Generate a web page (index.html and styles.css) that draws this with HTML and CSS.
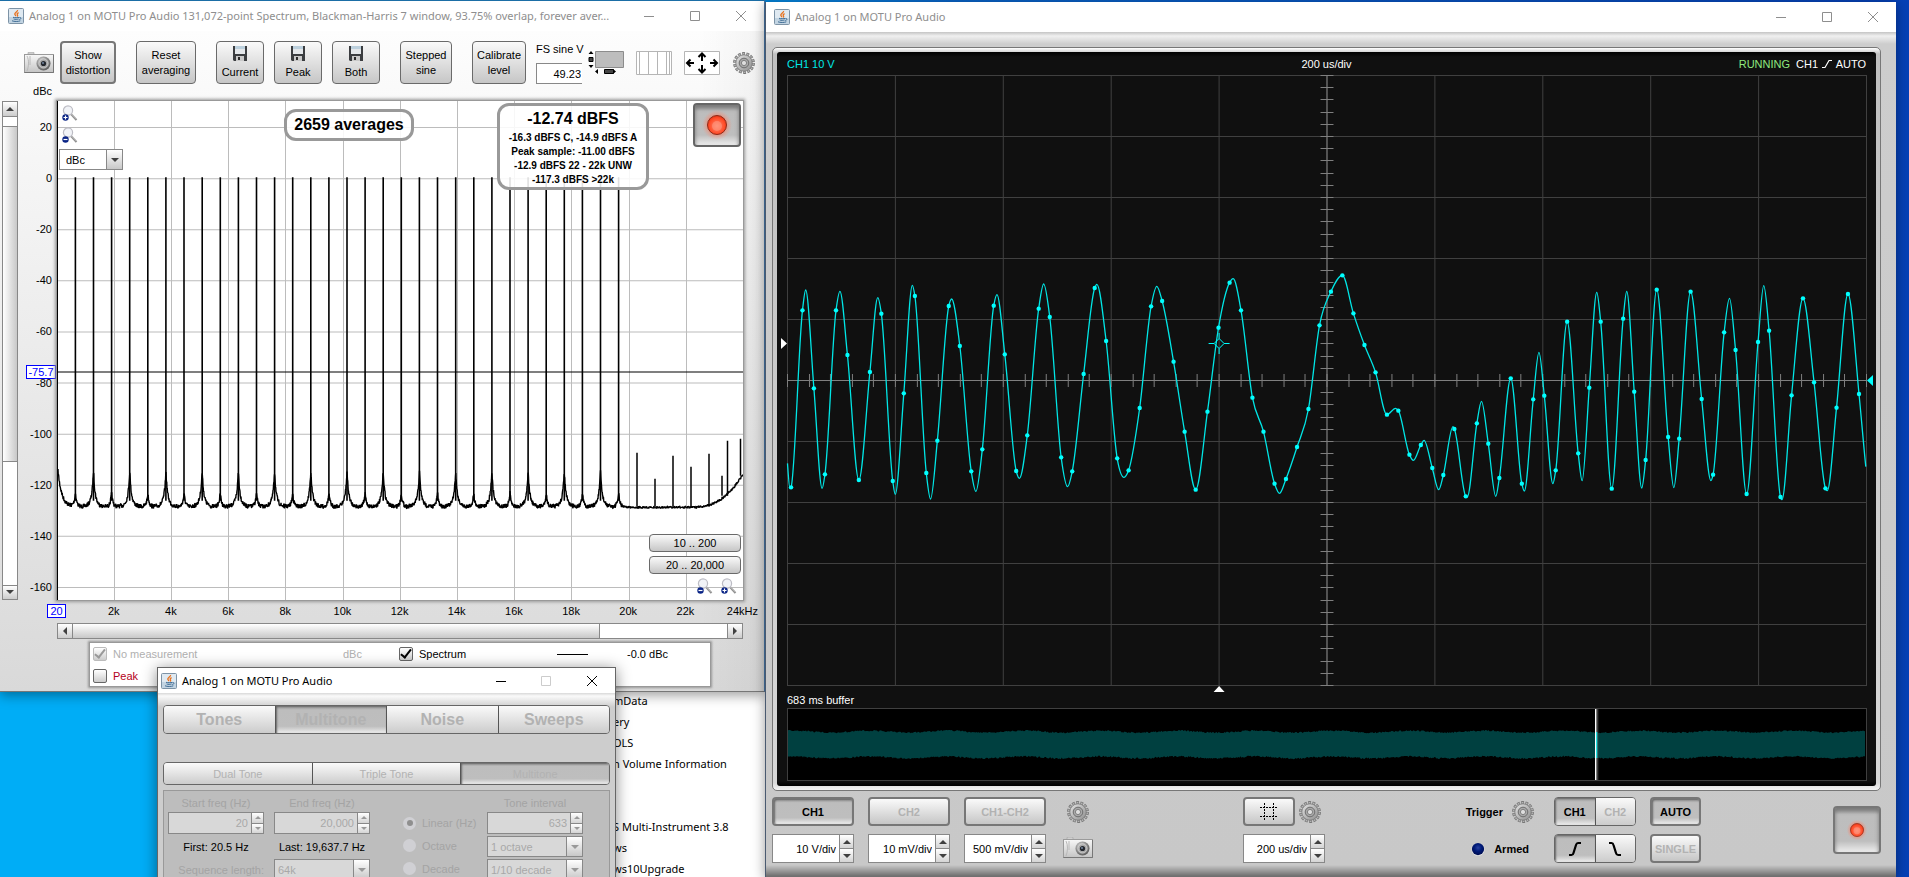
FILE: index.html
```html
<!DOCTYPE html>
<html lang="en">
<head>
<meta charset="utf-8">
<title>Analog 1 on MOTU Pro Audio</title>
<link rel="stylesheet" href="styles.css">
</head>
<body>
<svg class="defs" aria-hidden="true">
  <defs>
    <linearGradient id="metal" x1="0" y1="0" x2="1" y2="1">
      <stop offset="0" stop-color="#e4e4e4"/><stop offset="1" stop-color="#8e8e8e"/>
    </linearGradient>
    <linearGradient id="body" x1="0" y1="0" x2="0" y2="1">
      <stop offset="0" stop-color="#f8f8f8"/><stop offset="1" stop-color="#c4c4c4"/>
    </linearGradient>
    <radialGradient id="lens" cx=".4" cy=".35" r=".7">
      <stop offset="0" stop-color="#e8e8e8"/><stop offset=".6" stop-color="#8a8a8a"/><stop offset="1" stop-color="#555"/>
    </radialGradient>
    <radialGradient id="glow"><stop offset=".55" stop-color="#ff6a4a" stop-opacity=".6"/><stop offset="1" stop-color="#ff8a70" stop-opacity="0"/></radialGradient>
    <radialGradient id="red" cx=".5" cy=".55" r=".6"><stop offset="0" stop-color="#ff8a70"/><stop offset=".7" stop-color="#ff4a26"/><stop offset="1" stop-color="#d22c10"/></radialGradient>
    <radialGradient id="navy" cx=".5" cy=".4" r=".6"><stop offset="0" stop-color="#2740a0"/><stop offset=".5" stop-color="#001a78"/><stop offset="1" stop-color="#000e50"/></radialGradient>
  </defs>
  <symbol id="java" viewBox="0 0 16 16">
    <rect x=".5" y=".5" width="15" height="15" rx="1" fill="#dfe9f1" stroke="#7d93a6"/>
    <path d="M1 9h14v6H1z" fill="#c2d4e2"/>
    <path d="M9.6 2c.4 1.400-3 2.400-2.800 4 .1.900 1 1.300 1 2.200M10.600 4.600c-1.400.7-1.900 1.300-1.100 2.300.4.600.2 1-.4 1.500" fill="none" stroke="#e8711c" stroke-width="1.300"/>
    <path d="M5 9.300c1.500.5 5 .5 6.200 0M5.600 11c1.500.5 3.800.5 5 0M4 12.800c2 .9 6.500.9 8.300 0M11.500 9.500c2-.3 2 1.600-.2 2" fill="none" stroke="#3f6c94" stroke-width="1"/>
  </symbol>
  <symbol id="camera" viewBox="0 0 30 22">
    <rect x="4" y="0" width="6" height="4" rx="1" fill="#cfcfcf" stroke="#a0a0a0" stroke-width=".6"/>
    <rect x=".5" y="2.500" width="29" height="18" fill="url(#body)" stroke="#9a9a9a"/>
    <path d="M29.500 3v17.500H.5" fill="none" stroke="#777"/>
    <path d="M3 4c2 4 2 10 0 15M6 4v9" fill="none" stroke="#b8b8b8"/>
    <circle cx="19.500" cy="11.500" r="7" fill="url(#lens)"/>
    <circle cx="19.500" cy="11.500" r="4.600" fill="#a9a9a9" stroke="#dcdcdc" stroke-width=".7"/>
    <circle cx="19.500" cy="11.500" r="2.600" fill="#23272e"/><circle cx="19" cy="11" r=".9" fill="#7d91ac"/>
  </symbol>
  <symbol id="gear" viewBox="0 0 22 22">
    <circle cx="11" cy="11" r="9.500" fill="none" stroke="#777" stroke-width="2.800" stroke-dasharray="2.900 1.363"/>
    <circle cx="11" cy="11" r="9.300" fill="none" stroke="#b4b4b4" stroke-width="1.600" stroke-dasharray="1.600 2.573" stroke-dashoffset="-.6"/>
    <circle cx="11" cy="11" r="8.200" fill="url(#metal)" stroke="#777" stroke-width=".8"/>
    <circle cx="11" cy="11" r="4.800" fill="#a8a8a8" stroke="#6e6e6e" stroke-width="1"/>
    <circle cx="11" cy="11" r="2.600" fill="#dedede" stroke="#808080" stroke-width="1"/>
  </symbol>
  <symbol id="floppy" viewBox="0 0 14 15">
    <path d="M0 0h14v15H1l-1-1z" fill="#3b3d40"/>
    <path d="M2 0h10v8H2z" fill="#e4e7ea"/><path d="M2 0h10v3H2z" fill="#bcd0dd"/>
    <path d="M3 10h8v5H3z" fill="#c9c9c9"/><path d="M5 11h2v3H5z" fill="#2a2a2a"/>
  </symbol>
  <symbol id="lensbase" viewBox="0 0 16 16">
    <path d="M9 9l5.500 6" stroke="#909090" stroke-width="2"/><path d="M9.500 9l5 5" stroke="#d6d6d6" stroke-width=".8"/>
    <circle cx="6" cy="5.500" r="4.600" fill="#f1f3f7" stroke="#bcbcc4" stroke-width="1.200"/>
    <circle cx="3.500" cy="12.500" r="3.200" fill="#0a2486"/>
  </symbol>
  <symbol id="zoomin" viewBox="0 0 16 16"><use href="#lensbase"/><path d="M1.500 12.500h4M3.500 10.500v4" stroke="#fff" stroke-width="1.200"/></symbol>
  <symbol id="zoomout" viewBox="0 0 16 16"><use href="#lensbase"/><path d="M1.500 12.500h4" stroke="#fff" stroke-width="1.200"/></symbol>
  <symbol id="record" viewBox="0 0 32 32">
    <circle cx="16" cy="16" r="15" fill="url(#glow)"/>
    <circle cx="16" cy="16" r="9.500" fill="url(#red)" stroke="#8e2a18" stroke-width="1"/>
    <circle cx="16" cy="17" r="5" fill="#ff9c86" opacity=".55"/>
  </symbol>
  <symbol id="up" viewBox="0 0 8 4"><path d="M0 4L4 0l4 4z" fill="currentColor"/></symbol>
  <symbol id="down" viewBox="0 0 8 4"><path d="M0 0h8L4 4z" fill="currentColor"/></symbol>
  <symbol id="min" viewBox="0 0 10 10"><path d="M0 5.500h10" stroke="currentColor"/></symbol>
  <symbol id="max" viewBox="0 0 10 10"><path d="M.5.5h9v9h-9z" fill="none" stroke="currentColor"/></symbol>
  <symbol id="close" viewBox="0 0 10 10"><path d="M0 0l10 10M10 0L0 10" stroke="currentColor"/></symbol>
</svg>

<main class="desktop">

  <ul class="explorer">
    <li>mData</li><li>ery</li><li>OLS</li><li>n Volume Information</li><li></li><li></li>
    <li>S Multi-Instrument 3.8</li><li>ws</li><li>ws10Upgrade</li>
  </ul>

  <section class="window rta">
    <header class="titlebar">
      <svg class="java"><use href="#java"/></svg>
      <h1>Analog 1 on MOTU Pro Audio 131,072-point Spectrum, Blackman-Harris 7 window, 93.75% overlap, forever aver...</h1>
      <button aria-label="Minimize"><svg><use href="#min"/></svg></button>
      <button aria-label="Maximize"><svg><use href="#max"/></svg></button>
      <button aria-label="Close"><svg><use href="#close"/></svg></button>
    </header>
    <div class="rta-body">
      <div class="toolbar">
        <button class="plain" aria-label="Capture"><svg class="camera"><use href="#camera"/></svg></button>
        <button class="btn tool selected w56">Show<br>distortion</button>
        <button class="btn tool w60 gap">Reset<br>averaging</button>
        <button class="btn tool w48 gap"><svg class="floppy"><use href="#floppy"/></svg>Current</button>
        <button class="btn tool w48"><svg class="floppy"><use href="#floppy"/></svg>Peak</button>
        <button class="btn tool w48"><svg class="floppy"><use href="#floppy"/></svg>Both</button>
        <button class="btn tool w52 gap">Stepped<br>sine</button>
        <button class="btn tool w54 gap">Calibrate<br>level</button>
        <div class="fs"><label for="fs">FS sine V</label><input id="fs" value="49.23"></div>
        <button class="plain ico" aria-label="Scrollbars">
          <svg class="i36" viewBox="0 0 36 24"><path d="M7.500.5h28v16h-28z" fill="#bdbdbd" stroke="#8c8c8c"/><path d="M.5 3L3 0l2.500 3zM.5 14L3 17l2.500-3zM10 18v5l-3-2.500zM25 18v5l3-2.500z" fill="#000"/><path d="M1 6.500h4v4H1zM16.500 18.500h9v4h-9z" fill="#444" stroke="#000"/></svg>
        </button>
        <button class="plain ico" aria-label="Frequency axis">
          <svg class="i36" viewBox="0 0 36 24"><path d="M.5.5h35v23H.5z" fill="#fff" stroke="#b5b5b5"/><path d="M3.500 1v22M12.500 1v22M21.500 1v22M30.500 1v22M33.500 1v22" stroke="#b5b5b5"/></svg>
        </button>
        <button class="plain ico" aria-label="Graph limits">
          <svg class="i36" viewBox="0 0 36 24"><path d="M.5.5h35v23H.5z" fill="#fff" stroke="#b5b5b5"/><path d="M3 12h7M6.500 8.500L3 12l3.500 3.500M33 12h-7M29.500 8.500L33 12l-3.500 3.500M18 2.500V10M14.500 6L18 2.500 21.500 6M18 21.500V14M14.500 18l3.500 3.500 3.500-3.500" fill="none" stroke="#000" stroke-width="2"/></svg>
        </button>
        <button class="plain settings" aria-label="Settings"><svg class="gear"><use href="#gear"/></svg></button>
      </div>
      <div class="unit">dBc</div>
      <div class="graph">
        <div class="vscroll">
          <button aria-label="Scroll up"><svg class="arr"><use href="#up"/></svg></button>
          <i class="vthumb"></i>
          <button aria-label="Scroll down"><svg class="arr"><use href="#down"/></svg></button>
        </div>
        <div class="yaxis">
          <span>20</span><span>0</span><span>-20</span><span>-40</span><span>-60</span><span>-80</span><span>-100</span><span>-120</span><span>-140</span><span>-160</span>
          <b class="cursor-y">-75.7</b>
        </div>
        <div class="plot">
          <svg id="spectrum" viewBox="57 101 686 498" preserveAspectRatio="none"></svg>
          <div class="overlay">
            <div class="left-tools">
              <button class="plain" aria-label="Zoom in vertically"><svg class="mag"><use href="#zoomin"/></svg></button>
              <button class="plain" aria-label="Zoom out vertically"><svg class="mag"><use href="#zoomout"/></svg></button>
              <div class="combo unit-combo"><select aria-label="Unit"><option>dBc</option></select><i><svg class="arr"><use href="#down"/></svg></i></div>
            </div>
            <div class="avg">2659 averages</div>
            <div class="level"><strong>-12.74 dBFS</strong><span>-16.3 dBFS C, -14.9 dBFS A</span><span>Peak sample: -11.00 dBFS</span><span>-12.9 dBFS 22 - 22k UNW</span><span>-117.3 dBFS &gt;22k</span></div>
            <div class="right-tools">
              <button class="btn pressed rec" aria-label="Record"><svg class="led32"><use href="#record"/></svg></button>
              <button class="btn range first">10 .. 200</button>
              <button class="btn range">20 .. 20,000</button>
              <div class="mags"><button class="plain" aria-label="Zoom out"><svg class="mag"><use href="#zoomout"/></svg></button><button class="plain" aria-label="Zoom in"><svg class="mag"><use href="#zoomin"/></svg></button></div>
            </div>
          </div>
        </div>
      </div>
      <div class="xaxis"><span><b>20</b></span><span>2k</span><span>4k</span><span>6k</span><span>8k</span><span>10k</span><span>12k</span><span>14k</span><span>16k</span><span>18k</span><span>20k</span><span>22k</span><span class="last">24kHz</span></div>
      <div class="hscroll">
        <button aria-label="Scroll left"><svg class="arr turn-l"><use href="#up"/></svg></button>
        <i class="hthumb"></i>
        <button aria-label="Scroll right"><svg class="arr turn-r"><use href="#up"/></svg></button>
      </div>
      <div class="legend">
        <label class="off"><input type="checkbox" checked disabled>No measurement</label><span class="off">dBc</span>
        <label><input type="checkbox" checked>Spectrum</label><i class="line"></i><span>-0.0 dBc</span>
        <label class="peak"><input type="checkbox">Peak</label>
      </div>
    </div>
  </section>

  <section class="window gen">
    <header class="titlebar active">
      <svg class="java"><use href="#java"/></svg>
      <h1>Analog 1 on MOTU Pro Audio</h1>
      <button aria-label="Minimize"><svg><use href="#min"/></svg></button>
      <button aria-label="Maximize" disabled><svg><use href="#max"/></svg></button>
      <button aria-label="Close"><svg><use href="#close"/></svg></button>
    </header>
    <div class="gen-body">
      <div class="seg tabs"><button disabled>Tones</button><button class="pressed" disabled>Multitone</button><button disabled>Noise</button><button disabled>Sweeps</button></div>
      <div class="seg subtabs"><button disabled>Dual Tone</button><button disabled>Triple Tone</button><button class="pressed" disabled>Multitone</button></div>
      <div class="gen-panel">
        <label for="sf">Start freq (Hz)</label><label for="ef">End freq (Hz)</label><i></i><label for="ti">Tone interval</label>
        <div class="spin off"><input id="sf" value="20" disabled><span><button disabled aria-label="Increase"><svg class="tiny"><use href="#up"/></svg></button><button disabled aria-label="Decrease"><svg class="tiny"><use href="#down"/></svg></button></span></div>
        <div class="spin off"><input id="ef" value="20,000" disabled><span><button disabled aria-label="Increase"><svg class="tiny"><use href="#up"/></svg></button><button disabled aria-label="Decrease"><svg class="tiny"><use href="#down"/></svg></button></span></div>
        <label class="radio"><input type="radio" name="sp" checked disabled>Linear (Hz)</label>
        <div class="spin off"><input id="ti" value="633" disabled><span><button disabled aria-label="Increase"><svg class="tiny"><use href="#up"/></svg></button><button disabled aria-label="Decrease"><svg class="tiny"><use href="#down"/></svg></button></span></div>
        <span class="val">First: 20.5 Hz</span><span class="val">Last: 19,637.7 Hz</span>
        <label class="radio"><input type="radio" name="sp" disabled>Octave</label>
        <div class="combo off"><select disabled aria-label="Octave step"><option>1 octave</option></select><i><svg class="arr"><use href="#down"/></svg></i></div>
        <label class="seq" for="sl">Sequence length:</label>
        <div class="combo off"><select id="sl" disabled><option>64k</option></select><i><svg class="arr"><use href="#down"/></svg></i></div>
        <label class="radio"><input type="radio" name="sp" disabled>Decade</label>
        <div class="combo off"><select disabled aria-label="Decade step"><option>1/10 decade</option></select><i><svg class="arr"><use href="#down"/></svg></i></div>
      </div>
    </div>
  </section>

  <section class="window scope">
    <header class="titlebar">
      <svg class="java"><use href="#java"/></svg>
      <h1>Analog 1 on MOTU Pro Audio</h1>
      <button aria-label="Minimize"><svg><use href="#min"/></svg></button>
      <button aria-label="Maximize"><svg><use href="#max"/></svg></button>
      <button aria-label="Close"><svg><use href="#close"/></svg></button>
    </header>
    <div class="scope-body">
      <div class="bezel"><div class="screen">
        <div class="readout"><span class="ch">CH1 10 V</span><span>200 us/div</span><span class="state"><em>RUNNING</em> CH1 <svg class="edge" viewBox="0 0 10 10"><path d="M0 8.500h3L7 1.500h3" fill="none" stroke="#fff" stroke-width="1.200"/></svg> AUTO</span></div>
        <svg id="trace" viewBox="777 74 1100 619" preserveAspectRatio="none"></svg>
        <div class="buffer-label">683 ms buffer</div>
        <svg id="buffer" viewBox="777 708 1100 74" preserveAspectRatio="none"></svg>
      </div></div>
      <div class="controls">
        <div class="col"><button class="btn pressed">CH1</button><div class="spin"><input aria-label="CH1 scale" value="10 V/div"><span><button aria-label="Increase"><svg class="arr"><use href="#up"/></svg></button><button aria-label="Decrease"><svg class="arr"><use href="#down"/></svg></button></span></div></div>
        <div class="col"><button class="btn" disabled>CH2</button><div class="spin"><input aria-label="CH2 scale" value="10 mV/div"><span><button aria-label="Increase"><svg class="arr"><use href="#up"/></svg></button><button aria-label="Decrease"><svg class="arr"><use href="#down"/></svg></button></span></div></div>
        <div class="col"><button class="btn" disabled>CH1-CH2</button><div class="spin"><input aria-label="Difference scale" value="500 mV/div"><span><button aria-label="Increase"><svg class="arr"><use href="#up"/></svg></button><button aria-label="Decrease"><svg class="arr"><use href="#down"/></svg></button></span></div></div>
        <div class="col icons"><button class="plain" aria-label="Settings"><svg class="gear"><use href="#gear"/></svg></button><button class="plain" aria-label="Capture"><svg class="camera"><use href="#camera"/></svg></button></div>
        <div class="col time">
          <div class="row"><button class="btn grid-btn" aria-label="Grid"><svg class="hash" viewBox="0 0 18 18"><path d="M4.500 0v18M13.500 0v18M0 4.500h18M0 13.500h18" stroke="#000" stroke-dasharray="2 1"/></svg></button><button class="plain" aria-label="Time settings"><svg class="gear"><use href="#gear"/></svg></button></div>
          <div class="spin"><input aria-label="Time scale" value="200 us/div"><span><button aria-label="Increase"><svg class="arr"><use href="#up"/></svg></button><button aria-label="Decrease"><svg class="arr"><use href="#down"/></svg></button></span></div>
        </div>
        <div class="col trig"><div class="row">Trigger <button class="plain" aria-label="Trigger settings"><svg class="gear"><use href="#gear"/></svg></button></div><div class="row armed"><svg class="dot" viewBox="0 0 16 16"><circle cx="8" cy="8.500" r="7.500" fill="#e4e4e4"/><circle cx="8" cy="8" r="7" fill="url(#navy)"/></svg>Armed</div></div>
        <div class="col"><div class="seg"><button class="pressed">CH1</button><button disabled>CH2</button></div>
          <div class="seg"><button class="pressed" aria-label="Rising edge"><svg class="slope" viewBox="0 0 16 16"><path d="M2 14h2.500q1.500 0 2-2l2.500-8q.6-2 2-2H14" fill="none" stroke="#000" stroke-width="2.200"/></svg></button><button aria-label="Falling edge"><svg class="slope" viewBox="0 0 16 16"><path d="M2 2h2.500q1.500 0 2 2L9 12q.6 2 2 2H14" fill="none" stroke="#000" stroke-width="2.200"/></svg></button></div></div>
        <div class="col mode"><button class="btn pressed">AUTO</button><button class="btn" disabled>SINGLE</button></div>
        <button class="btn pressed rec" aria-label="Record"><svg class="led20"><use href="#record"/></svg></button>
      </div>
    </div>
  </section>
</main>
<script src="plots.js"></script>
</body>
</html>
```
FILE: styles.css
```css
* { box-sizing: border-box; }
body { margin: 0; font: 11px/14px "Liberation Sans", Arial, sans-serif; color: #000; }
button, input, select { font: inherit; color: inherit; margin: 0; padding: 0; border-radius: 0; outline: 0; }
button svg { display: block; }
.defs { position: absolute; width: 0; height: 0; }

.desktop { position: relative; height: 100vh; overflow: hidden; background: linear-gradient(90deg, #00adf6 0, #00adf6 30%, #0a64c8 50%, #0540b6 100%); }
.window { position: absolute; display: flex; flex-direction: column; }

.titlebar { display: flex; align-items: center; height: 30px; flex: none; padding-left: 8px; background: #fff; color: #8e8e8e; }
.titlebar.active { color: #000; }
.titlebar .java { width: 16px; height: 16px; margin-right: 5px; flex: none; }
.titlebar h1 { flex: 1; margin: 0; font: 11px/16px "Noto Sans", "Open Sans", sans-serif; white-space: nowrap; }
.titlebar button { width: 46px; height: 28px; border: 0; background: none; display: grid; place-items: center; flex: none; }
.titlebar button svg { width: 10px; height: 10px; }
.titlebar button:disabled { color: #ccc; }

/* shared controls */
.plain { border: 0; background: none; display: block; }
.camera { width: 30px; height: 22px; }
.gear { width: 22px; height: 22px; }
.mag { width: 16px; height: 16px; }
.arr { width: 8px; height: 4px; display: block; color: #404040; }
.tiny { width: 6px; height: 3px; color: #999; }
.btn { border: 1px solid #6a6a6a; border-radius: 4px; background: linear-gradient(#fafafa, #c6c6c6); display: flex; align-items: center; justify-content: center; }
.btn.selected { border: 2px solid #777; }
.pressed { background: linear-gradient(#9c9c9c 0, #bdbdbd 15%, #bebebe 75%, #ededed 100%) !important; box-shadow: inset 1px 1px 2px #666; }
.btn:disabled, .seg button:disabled { color: #b2b2b2; }
.rec { border: 2px solid #666; box-shadow: inset 0 3px 4px #777; }
.spin, .combo { display: flex; border: 1px solid #888; background: #fff; }
.spin input { flex: 1; min-width: 0; border: 0; background: none; text-align: right; padding-right: 3px; }
.spin span { display: flex; flex-direction: column; width: 14px; border-left: 1px solid #888; }
.spin button { flex: 1; border: 0; background: linear-gradient(#fff, #d4d4d4); display: grid; place-items: center; }
.spin button + button { border-top: 1px solid #888; }
.combo select { flex: 1; min-width: 0; border: 0; background: none; appearance: none; padding-left: 6px; opacity: 1; }
.combo i { display: grid; place-items: center; width: 16px; border-left: 1px solid #888; background: linear-gradient(#fff, #c8c8c8); }
.combo.off, .spin.off { background: #d8d8d8; color: #a8a8a8; }
.combo.off .arr { color: #999; }
.seg { display: flex; border: 1px solid #666; border-radius: 4px; overflow: hidden; }
.seg button { flex: 1; border: 0; background: linear-gradient(#fafafa, #ccc); display: grid; place-items: center; }
.seg button + button { border-left: 1px solid #555; }

/* explorer */
.explorer { position: absolute; left: 600px; top: 690px; width: 170px; bottom: 0; margin: 0; padding: 0 0 0 13px; list-style: none; background: #fff; font: 11px/21px "Noto Sans", "Open Sans", sans-serif; white-space: nowrap; }
.explorer li { height: 21px; }

/* spectrum window */
.rta { left: 0; top: 0; width: 765px; border-top: 1px solid #1b6ea6; border-bottom: 1px solid #777; border-right: 1px solid #4878a8; box-shadow: 0 3px 12px #0006; }
.rta-body { background: linear-gradient(90deg, #0000 700px, #0000000a), linear-gradient(#fdfdfd, #d9d9d9); padding-bottom: 4px; }
.toolbar { display: flex; align-items: center; gap: 10px; padding: 10px 0 0 24px; }
.toolbar > .selected { margin-left: -4px; }
.toolbar .gap { margin-left: 10px; }
.tool { height: 43px; line-height: 15px; flex-direction: column; flex: none; }
.w48 { width: 48px; } .w52 { width: 52px; } .w54 { width: 54px; } .w56 { width: 56px; } .w60 { width: 60px; }
.floppy { width: 14px; height: 15px; margin-bottom: 4px; }
.fs { width: 50px; white-space: nowrap; flex: none; }
.fs label { display: block; line-height: 16px; }
.fs input { display: block; width: 46px; height: 21px; margin-top: 6px; border: 1px solid #888; border-right: 0; text-align: right; padding-right: 1px; background: #fff; }
.toolbar .ico { margin-left: -8px; }
.toolbar .ico + .ico { margin-left: 2px; }
.toolbar .settings { margin-left: 3px; }
.i36 { width: 36px; height: 24px; }
.unit { width: 52px; text-align: right; height: 17px; line-height: 14px; }
.graph { display: flex; height: 499px; padding: 0 21px 0 2px; }
.vscroll { width: 16px; border: 1px solid #888; background: #fff; display: flex; flex-direction: column; justify-content: space-between; }
.vscroll button { height: 15px; border: 0; border-bottom: 1px solid #888; background: linear-gradient(#fff, #ccc); display: grid; place-items: center; }
.vscroll button:last-child { border: 0; border-top: 1px solid #888; }
.vthumb { flex: none; height: 336px; margin: 9px 0 123px; border: solid #888; border-width: 1px 0; background: linear-gradient(90deg, #fff, #c8c8c8); }
.yaxis { position: relative; width: 39px; padding: 18px 5px 5px 0; display: flex; flex-direction: column; justify-content: space-between; text-align: right; }
.yaxis span { line-height: 16px; }
.cursor-y, .xaxis b { font-weight: 400; color: #00f; background: #fff; border: 1px solid #00f; }
.cursor-y { position: absolute; top: 264px; right: 1px; line-height: 12px; width: 30px; text-align: center; white-space: nowrap; }
.plot { position: relative; flex: 1; background: #fff; box-shadow: 0 0 0 1px #999, 0 0 3px 2px #999; }
.plot > svg { display: block; width: 100%; height: 100%; }
.overlay { position: absolute; inset: 0; }
.left-tools { position: absolute; left: 5px; top: 1px; }
.left-tools .plain { height: 22px; }
.unit-combo { width: 64px; height: 21px; margin: 3px 0 0 -3px; }
.avg, .level { position: absolute; border: 3px solid #999; border-radius: 12px; background: #ffffffe0; font-weight: 700; text-align: center; white-space: nowrap; }
.avg { left: 227px; top: 8px; width: 130px; font-size: 16px; line-height: 26px; }
.level { left: 440px; top: 2px; width: 152px; height: 87px; font-size: 10px; display: flex; flex-direction: column; }
.level strong { font-size: 16px; line-height: 25px; }
.right-tools { position: absolute; right: 2px; top: 2px; bottom: 6px; width: 92px; display: flex; flex-direction: column; }
.right-tools .rec { width: 48px; height: 44px; align-self: flex-end; }
.led32 { width: 32px; height: 32px; } .led20 { width: 22px; height: 22px; }
.range { height: 18px; margin-bottom: 4px; }
.range.first { margin-top: auto; }
.mags { display: flex; justify-content: flex-end; gap: 8px; padding-right: 4px; }
.xaxis { display: grid; grid-template-columns: repeat(12, 1fr) 50px; margin: 4px 0 0 28px; text-align: center; line-height: 14px; height: 19px; }
.xaxis b { display: inline-block; line-height: 12px; padding: 0 2px; }
.xaxis .last { text-align: right; padding-right: 6px; }
.hscroll { display: flex; height: 16px; margin: 0 21px 0 57px; border: 1px solid #888; background: #fff; justify-content: space-between; }
.hscroll button { width: 15px; border: 0; border-right: 1px solid #888; background: linear-gradient(#fff, #ccc); display: grid; place-items: center; }
.hscroll button:last-child { border: 0; border-left: 1px solid #888; }
.hthumb { flex: none; width: 527px; margin-right: auto; border-right: 1px solid #888; background: linear-gradient(#fff, #c8c8c8); }
.turn-l { transform: rotate(-90deg); } .turn-r { transform: rotate(90deg); }
.legend { display: grid; grid-template-columns: 250px 56px 158px 70px 1fr; grid-auto-rows: 22px; align-items: center; margin: 3px 53px 0 89px; padding: 0 0 0 3px; height: 45px; border: 1px solid #999; box-shadow: 0 0 2px 1px #999; background: #fff; }
.legend label { display: flex; align-items: center; gap: 6px; }
.legend .line { width: 31px; height: 1px; background: #000; }
.legend .off { color: #b0b0b0; }
.legend .peak { color: #b40020; }
.legend input { appearance: none; width: 14px; height: 14px; border: 1px solid #666; border-radius: 2px; background: linear-gradient(#fff, #ccc); display: grid; place-items: center; }
.legend input:checked::after { content: ""; width: 4px; height: 9px; border: solid #000; border-width: 0 2px 2px 0; transform: rotate(38deg); margin-top: -3px; }
.legend input:disabled { border-color: #bbb; }
.legend input:disabled::after { border-color: #999; }

/* generator window */
.gen { left: 157px; top: 667px; width: 459px; bottom: -40px; border: 1px solid #666; background: #cdcdcd; box-shadow: 0 2px 14px #0007; }
.gen .titlebar { height: 25px; padding-left: 3px; }
.gen .titlebar button { width: 45px; }
.gen .titlebar button:last-child { width: 47px; }
.gen-body { flex: 1; padding: 12px 5px 0; background: linear-gradient(#d8d8d8 0, #fafafa 3px, #cdcdcd 14px); display: flex; flex-direction: column; }
.tabs { height: 29px; font: 700 16px/20px "Liberation Sans", Arial, sans-serif; margin-bottom: 28px; flex: none; }
.subtabs { height: 23px; margin-bottom: 5px; flex: none; }
.gen-panel { flex: 1; border: 1px solid #999; background: #bdbdbd; color: #a4a4a4; padding: 4px 0 0 4px; display: grid; grid-template-columns: 96px 96px 97px 96px; column-gap: 10px; grid-template-rows: 17px 22px 23px 23px; align-content: start; text-align: center; line-height: 16px; }
.gen-panel .val { color: #000; line-height: 26px; }
.gen-panel .seq { line-height: 26px; text-align: right; }
.gen-panel .spin span { width: 12px; }
.gen-panel .combo { height: 21px; margin-top: 2px; text-align: left; }
.gen-panel .combo select { padding-left: 3px; }
.gen-panel > label { white-space: nowrap; }
.radio { display: flex; align-items: center; gap: 6px; padding-left: 23px; white-space: nowrap; }
.radio input { appearance: none; width: 13px; height: 13px; border-radius: 50%; background: #d0d0d4; flex: none; display: grid; place-items: center; }
.radio input:checked::after { content: ""; width: 6px; height: 6px; border-radius: 50%; background: #8f8f8f; }

/* scope window */
.scope { left: 765px; right: 13px; top: 2px; bottom: 0; border-left: 1px solid #4a5a70; box-shadow: 0 2px 12px #0006; }
.scope-body { flex: 1; min-height: 0; display: flex; flex-direction: column; padding: 15px 15px 14px 6px; background: linear-gradient(#c4c4c4 0, #f0f0f0 4px, #cdcdcd 12px, #c8c8c8 calc(100% - 12px), #707070 calc(100% - 1px)); }
.bezel { flex: 1; min-height: 0; border: 1px solid #777; border-radius: 5px; padding: 4px; background: linear-gradient(#fff, #c0c0c0 6px, #d8d8d8 99%, #f4f4f4); display: flex; }
.screen { flex: 1; min-width: 0; background: linear-gradient(#000, #101010 5px, #101010 calc(100% - 5px), #000); border-radius: 3px; display: flex; flex-direction: column; color: #fff; }
.readout { display: grid; grid-template-columns: 1fr auto 1fr; padding: 5px 10px 3px; line-height: 14px; }
.ch { color: #00e8e8; }
.state { text-align: right; }
.state em { font-style: normal; color: #8fe87f; margin-right: 3px; }
.edge { width: 10px; height: 10px; margin: 0 1px; vertical-align: -1px; }
#trace { display: block; width: 100%; flex: 1; min-height: 0; }
.buffer-label { padding-left: 10px; line-height: 15px; }
#buffer { display: block; width: 100%; height: 74px; margin-bottom: 4px; flex: none; }
.controls { display: flex; align-items: center; padding-top: 6px; font-weight: 700; gap: 14px; }
.controls .col { display: flex; flex-direction: column; gap: 8px; width: 82px; flex: none; }
.controls .btn:not(.rec), .controls .seg, .controls .spin { height: 29px; }
.controls .spin { font-weight: 400; }
.controls .btn { border-width: 2px; border-color: #777; }
.controls .icons { width: 30px; align-items: center; gap: 14px; margin-left: 3px; }
.controls .row { display: flex; align-items: center; gap: 4px; }
.controls .grid-btn { width: 52px; }
.controls .time { margin-left: 136px; }
.hash { width: 18px; height: 18px; }
.slope { width: 16px; height: 16px; }
.controls .trig { margin-left: 123px; width: 72px; align-items: flex-end; }
.controls .trig .row { height: 29px; gap: 9px; }
.controls .armed { padding-right: 5px; }
.dot { width: 14px; height: 14px; }
.controls .trig + .col { margin-left: 6px; }
.controls .mode { width: 51px; }
.controls .rec { width: 48px; height: 48px; margin-left: auto; }
```
FILE: plots.js
```js
var NS = 'http://www.w3.org/2000/svg';
function add(svg, tag, attrs) {
  var e = document.createElementNS(NS, tag);
  for (var k in attrs) e.setAttribute(k, attrs[k]);
  svg.appendChild(e);
}
var seed = 7;
function rnd() { seed = (seed * 16807) % 2147483647; return seed / 2147483647; }

/* spectrum: 20 dB per 51 units, 28.6 units per kHz */
(function () {
  var s = document.getElementById('spectrum'), d = '', i, x;
  for (i = 1; i < 12; i++) d += 'M' + (Math.floor(57 + i * 57.2) + 0.5) + ' 101V599';
  for (i = 0; i < 10; i++) d += 'M57 ' + (127.5 + i * 51) + 'H743';
  add(s, 'path', { d: d, stroke: '#bcbcbc', fill: 'none' });
  d = '';
  var tones = [];
  for (i = 1; i <= 31; i++) { x = 57.3 + i * 18.107; tones.push(x); d += 'M' + x.toFixed(1) + ' 177V500'; }
  add(s, 'path', { d: d, stroke: '#000', 'stroke-width': 1.6, fill: 'none' });
  var spikes = [[637, 452], [655, 478], [673, 455], [691, 466], [709, 453], [722, 475], [727.5, 440], [740.5, 438]];
  d = '';
  spikes.forEach(function (p) { d += 'M' + p[0] + ' ' + p[1] + 'V' + (p[0] > 735 ? 475 : p[0] > 720 ? 495 : 506); });
  add(s, 'path', { d: d, stroke: '#000', 'stroke-width': 1.5, fill: 'none' });
  d = '';
  for (x = 58; x <= 743; x += 0.25) {
    var y = 506.5 - 36 * Math.exp(-(x - 58) / 4);
    tones.forEach(function (t, k) {
      var a = Math.abs(x - t);
      y -= k % 2 ? 24 * Math.exp(-a / 1.4) + 12 * Math.exp(-a / 3.6) : 12 * Math.exp(-a / 1.2) + 2 * Math.exp(-a / 4);
    });
    if (x > 690) y -= 33 * Math.pow((x - 690) / 53, 2.6);
    var n = x > 622 ? 2.4 : 4.6;
    d += (d ? 'L' : 'M') + x + ' ' + (y + (rnd() - 0.5) * n).toFixed(1);
  }
  add(s, 'path', { d: d, stroke: '#000', 'stroke-width': 1.4, fill: 'none', 'stroke-linejoin': 'bevel' });
  add(s, 'path', { d: 'M57 371.5H743M57.500 101V599', stroke: '#000', fill: 'none' });
})();

/* scope trace */
(function () {
  var s = document.getElementById('trace'), d = '', i, j;
  for (i = 0; i <= 10; i++) d += 'M' + (787.5 + i * 108) + ' 75V686M787 ' + (75.5 + i * 61) + 'H1868';
  add(s, 'path', { d: d, stroke: '#404040', fill: 'none' });
  d = 'M787 380.500H1868M1327.500 75V686';
  for (i = 0; i <= 50; i++) {
    d += 'M' + (Math.round(787 + i * 21.6) + 0.5) + ' 374V387';
    d += 'M1321 ' + (Math.round(75 + i * 12.2) + 0.5) + 'H1334';
  }
  add(s, 'path', { d: d, stroke: '#808080', fill: 'none' });

  var dotsA = [31,712,63,181,95,415,126,673,157,181,189,315,221,690,252,366,284,191,316,693,347,430,378,138,410,669,441,572,473,168,504,288,536,664,567,598,599,167,630,313,662,663,693,556,725,176,756,201,788,622,819,664,851,372,882,114,914,273,945,625,977,661,1008,474,1040,169,1071,153,1103,335,1134,545,1165,719,1198,485,1229,233,1260,98,1292,181,1324,443,1355,545,1386,701,1418,687,1449,591,1481,477,1512,226,1544,125];
  var turnsA = [21,640,28,716,72,120,118,715,168,124,274,143,323,733,371,106,422,747,481,147,549,724,608,134,671,685,739,102,806,710,888,103,964,682,1056,109,1270,86,1400,730];
  var dotsB = [36,76,67,190,98,285,129,367,161,494,193,482,224,614,256,585,288,654,319,675,350,537,382,739,413,520,445,581,476,684,508,385,539,701,571,448,602,437,634,661,666,215,697,610,728,413,760,215,791,716,823,206,854,425,886,630,917,119,949,561,980,566,1012,125,1043,447,1075,674,1106,247,1138,300,1169,732,1201,276,1232,242,1264,741,1295,436,1327,145,1358,397,1390,715,1421,473,1453,132,1484,432];
  var turnsB = [185,475,235,631,265,571,306,719,346,530,386,741,426,454,466,739,546,723,587,307,626,701,708,692,749,127,833,124,875,714,965,713,1069,692,1121,145,1217,107,1268,749,1395,722,1503,650];
  function pts(a, x0) {
    var r = [];
    for (var i = 0; i < a.length; i += 2) r.push([x0 + a[i] / 2.8, 250 + a[i + 1] / 3]);
    return r;
  }
  var dots = pts(dotsA, 780).concat(pts(dotsB, 1330));
  var p = dots.concat(pts(turnsA, 780), pts(turnsB, 1330)).sort(function (a, b) { return a[0] - b[0]; });
  var m = p.map(function (q, i) {
    if (!i || i === p.length - 1) return null;
    var h0 = q[0] - p[i - 1][0], h1 = p[i + 1][0] - q[0];
    var s0 = (q[1] - p[i - 1][1]) / h0, s1 = (p[i + 1][1] - q[1]) / h1;
    if (s0 * s1 <= 0) return 0;
    var c = (s0 * h1 + s1 * h0) / (h0 + h1);
    return (s0 < 0 ? -1 : 1) * Math.min(Math.abs(c), 3 * Math.abs(s0), 3 * Math.abs(s1));
  });
  m[0] = (p[1][1] - p[0][1]) / (p[1][0] - p[0][0]) * 1.4;
  j = p.length - 1;
  m[j] = (p[j][1] - p[j - 1][1]) / (p[j][0] - p[j - 1][0]) * 0.9;
  d = 'M' + p[0];
  for (i = 1; i < p.length; i++) {
    var h = (p[i][0] - p[i - 1][0]) / 3;
    d += 'C' + [p[i - 1][0] + h, p[i - 1][1] + h * m[i - 1], p[i][0] - h, p[i][1] - h * m[i], p[i][0], p[i][1]].map(function (v) { return v.toFixed(2); }).join(' ');
  }
  add(s, 'path', { d: d, stroke: '#00e6e6', fill: 'none', 'stroke-width': 1.3 });
  dots.forEach(function (q) { add(s, 'circle', { cx: q[0], cy: q[1], r: 2.2, fill: '#00ffff' }); });
  add(s, 'path', { d: 'M1214.500 343.500l5-5 5 5-5 5zM1209 343.500h5.500M1224.500 343.500h5.500M1219.500 333v5.500M1219.500 348.500v5.500', stroke: '#00ffff', fill: 'none' });
  add(s, 'path', { d: 'M781 338v11l6-5.500zM1214 692h11l-5.500-6z', fill: '#fff' });
  add(s, 'path', { d: 'M1874 375v11l-6-5.500z', fill: '#00ffff' });
})();

/* capture buffer overview */
(function () {
  var s = document.getElementById('buffer'), top = '', bot = '', x;
  add(s, 'rect', { x: 787.5, y: 708.5, width: 1080, height: 72, fill: '#000', stroke: '#404040' });
  for (x = 788; x <= 1866; x++) {
    var w = Math.cos((x - 870) / 77 * 2 * Math.PI);
    top += 'L' + x + ' ' + (731.6 - w + (rnd() - 0.5) * 1.4).toFixed(1);
    bot = 'L' + x + ' ' + (757.4 - w + (rnd() - 0.5) * 1.6).toFixed(1) + bot;
  }
  add(s, 'path', { d: 'M788 744' + top + bot + 'z', fill: '#004040' });
  add(s, 'path', { d: 'M1598.500 709V780', stroke: '#505050' });
  add(s, 'path', { d: 'M1596.500 709V780', stroke: '#fff', 'stroke-width': 1.5 });
  add(s, 'path', { d: 'M1597.500 732V758', stroke: '#00ffff' });
})();
```
